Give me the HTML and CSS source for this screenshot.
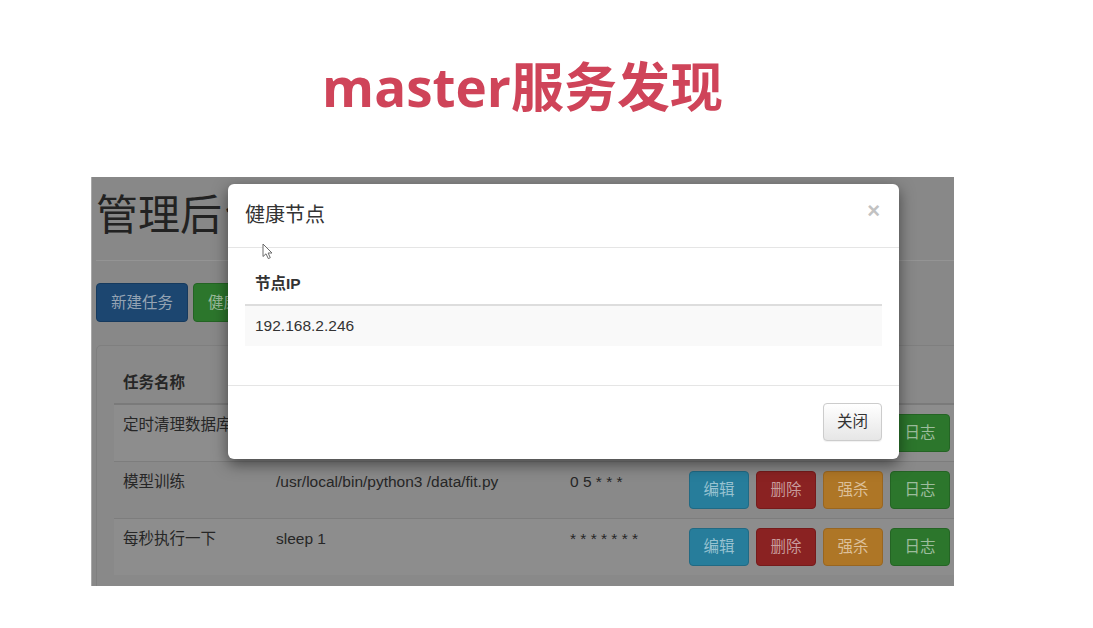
FILE: index.html
```html
<!DOCTYPE html>
<html lang="zh-CN">
<head>
<meta charset="utf-8">
<title>master服务发现</title>
<link rel="stylesheet" href="styles.css">
</head>
<body>
<div class="slide">
  <h1 class="slide-title">master服务发现</h1>
  <div class="shot">
    <div class="admin">
      <h2 class="admin-title">管理后台</h2>
      <div class="rule"></div>
      <div class="toolbar">
        <span class="btn btn-primary">新建任务</span>
        <span class="btn btn-success">健康节点</span>
      </div>
      <div class="tasks">
        <table class="task-table">
          <colgroup>
            <col class="col-name"><col class="col-cmd"><col class="col-cron"><col class="col-ops">
          </colgroup>
          <thead>
            <tr><th>任务名称</th><th>shell命令</th><th>cron表达式</th><th>任务操作</th></tr>
          </thead>
          <tbody>
            <tr>
              <td>定时清理数据库</td>
              <td>/usr/local/bin/python3 /data/clean.py</td>
              <td>0 0 * * *</td>
              <td class="ops"><div class="ops-row"><span class="btn btn-info">编辑</span><span class="btn btn-danger">删除</span><span class="btn btn-warning">强杀</span><span class="btn btn-success">日志</span></div></td>
            </tr>
            <tr>
              <td>模型训练</td>
              <td>/usr/local/bin/python3 /data/fit.py</td>
              <td>0 5 * * *</td>
              <td class="ops"><div class="ops-row"><span class="btn btn-info">编辑</span><span class="btn btn-danger">删除</span><span class="btn btn-warning">强杀</span><span class="btn btn-success">日志</span></div></td>
            </tr>
            <tr>
              <td>每秒执行一下</td>
              <td>sleep 1</td>
              <td>* * * * * * *</td>
              <td class="ops"><div class="ops-row"><span class="btn btn-info">编辑</span><span class="btn btn-danger">删除</span><span class="btn btn-warning">强杀</span><span class="btn btn-success">日志</span></div></td>
            </tr>
          </tbody>
        </table>
      </div>
    </div>

    <div class="modal">
      <div class="modal-header">
        <h4 class="modal-title">健康节点</h4>
        <span class="modal-close">×</span>
      </div>
      <div class="modal-body">
        <table class="node-table">
          <thead><tr><th>节点IP</th></tr></thead>
          <tbody><tr><td>192.168.2.246</td></tr></tbody>
        </table>
      </div>
      <div class="modal-footer">
        <span class="btn btn-default">关闭</span>
      </div>
      <svg class="cursor" width="11" height="17" viewBox="0 0 11 17" aria-hidden="true">
        <path d="M1 1 L1 13.5 L4 10.8 L6.3 15.6 L8.3 14.7 L6.1 10 L10 10 Z" fill="#ffffff" stroke="#6a6a6a" stroke-width="1" stroke-linejoin="round"/>
      </svg>
    </div>
  </div>
</div>
</body>
</html>
```

FILE: styles.css
```css
html, body {
  margin: 0;
  padding: 0;
  background: #ffffff;
}

body {
  width: 1093px;
  height: 628px;
  overflow: hidden;
  font-family: "Liberation Sans", "Noto Sans CJK SC", sans-serif;
}

.slide {
  display: flex;
  flex-direction: column;
}

.slide-title {
  margin: 57px 0 0;
  padding-right: 48px;
  text-align: center;
  font-family: "Open Sans", "Noto Sans CJK SC", sans-serif;
  font-weight: 700;
  font-size: 53px;
  line-height: 60px;
  color: #cf4459;
}

.shot {
  position: relative;
  margin: 60px 0 0 91px;
  width: 863px;
  height: 409px;
  overflow: hidden;
  background-color: #888888;
  border-left: 1px solid #a8a8a8;
  box-sizing: border-box;
}

.admin {
  width: 940px;
  padding: 15px 0 0 4px;
}

.admin-title {
  margin: 0;
  font-family: "Liberation Sans", "Noto Sans CJK SC", sans-serif;
  font-weight: 400;
  font-size: 42px;
  line-height: 48px;
  color: #222222;
}

.rule {
  border-top: 1px solid #949494;
  margin: 20px 0 22px;
}

.toolbar {
  display: flex;
  gap: 5px;
}

.btn {
  display: inline-block;
  box-sizing: border-box;
  padding: 0 14px;
  height: 38px;
  line-height: 36px;
  font-size: 15.5px;
  border: 1px solid transparent;
  border-radius: 4px;
  color: #a9a9a9;
  white-space: nowrap;
}

.toolbar .btn {
  height: 39px;
  line-height: 37px;
}

.btn-primary {
  background-color: #1c4670;
  border-color: #163a5e;
  color: #94a3b3;
}

.btn-success {
  background-color: #2c762c;
  border-color: #246424;
  color: #9cbc9c;
}

.btn-info {
  background-color: #277d9b;
  border-color: #216a84;
  color: #98c2d1;
}

.btn-danger {
  background-color: #8a2222;
  border-color: #761b1b;
  color: #c89c9c;
}

.btn-warning {
  background-color: #ae7626;
  border-color: #996620;
  color: #dcc09a;
}

.btn-default {
  color: #333333;
  background-color: #f4f4f4;
  background-image: linear-gradient(#ffffff, #e6e6e6);
  border-color: #cccccc;
  box-shadow: 0 1px 1px rgba(0, 0, 0, 0.06);
}

.tasks {
  margin-top: 23px;
  border: 1px solid #7f7f7f;
  border-radius: 5px;
  padding: 17px;
  background-color: #898989;
}

.task-table {
  border-collapse: collapse;
  table-layout: fixed;
  width: 100%;
  font-size: 15.5px;
  color: #262626;
}

.col-name { width: 153px; }
.col-cmd { width: 294px; }
.col-cron { width: 119px; }

.task-table th {
  text-align: left;
  padding: 9px;
  line-height: 22px;
  font-weight: 700;
  border-bottom: 2px solid #7a7a7a;
}

.task-table td {
  padding: 9px;
  line-height: 22px;
  vertical-align: top;
  border-top: 1px solid #7d7d7d;
}

.task-table tbody tr:nth-child(odd) {
  background-color: #8d8d8d;
}

.task-table td.ops {
  padding: 9px 0 9px 9px;
}

.ops-row {
  display: flex;
  gap: 7px;
}

.ops-row .btn {
  width: 60px;
  text-align: center;
  padding: 0;
}

.modal {
  position: absolute;
  left: 136px;
  top: 7px;
  width: 671px;
  background-color: #ffffff;
  border-radius: 6px;
  box-shadow: 0 5px 15px rgba(0, 0, 0, 0.5);
  font-size: 15.5px;
  color: #333333;
}

.modal-header {
  display: flex;
  justify-content: space-between;
  align-items: flex-start;
  padding: 16px 19px 17px 17px;
  border-bottom: 1px solid #e5e5e5;
}

.modal-title {
  margin: 0;
  font-weight: 400;
  font-size: 20px;
  line-height: 30px;
  color: #333333;
}

.modal-close {
  font-size: 22px;
  font-weight: 700;
  line-height: 22px;
  color: #c2c2c2;
}

.modal-body {
  padding: 16px 17px 17px;
}

.node-table {
  width: 100%;
  border-collapse: collapse;
  margin-bottom: 22px;
}

.node-table th {
  text-align: left;
  padding: 9px 10px;
  line-height: 22px;
  font-weight: 700;
  border-bottom: 2px solid #dddddd;
}

.node-table td {
  padding: 9px 10px;
  line-height: 22px;
  background-color: #f9f9f9;
}

.modal-footer {
  display: flex;
  justify-content: flex-end;
  padding: 17px 17px 18px;
  border-top: 1px solid #e5e5e5;
}

.modal-footer .btn {
  width: 59px;
  padding: 0;
  text-align: center;
}

.cursor {
  position: absolute;
  left: 34px;
  top: 59px;
}
```
